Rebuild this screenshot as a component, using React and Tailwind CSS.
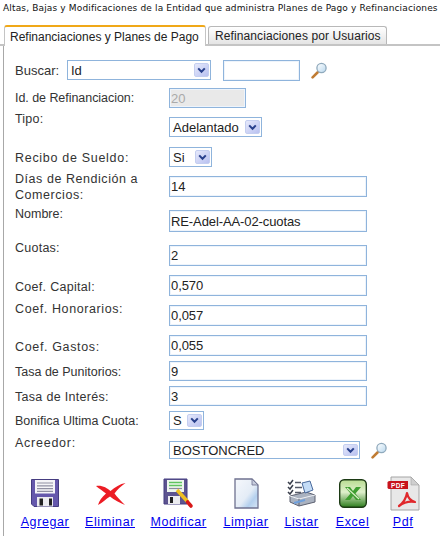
import React from "react";

const Lens = () => (
  <svg width="17" height="17" viewBox="0 0 17 17">
    <defs>
      <linearGradient id="lg" x1="0" y1="0" x2="1" y2="1">
        <stop offset="0" stopColor="#ffffff" />
        <stop offset="1" stopColor="#b9d8ee" />
      </linearGradient>
    </defs>
    <path d="M6.5 10.5L1.6 15.4" stroke="#c07c34" strokeWidth="2.6" strokeLinecap="round" />
    <circle cx="10.5" cy="6" r="4.6" fill="url(#lg)" stroke="#8fa9bc" strokeWidth="1.3" />
  </svg>
);

const Arrow = () => (
  <span className="flex h-full w-[15px] shrink-0 items-center justify-center rounded-[2px] border border-[#c4cef0] bg-gradient-to-br from-[#e6e9fb] to-[#b9c1f0]">
    <svg width="9" height="7" viewBox="0 0 9 7">
      <path d="M1.2 1.4L4.5 4.8L7.8 1.4" fill="none" stroke="#28408c" strokeWidth="2" />
    </svg>
  </span>
);

const Select = ({ value, className }) => (
  <div className={`flex items-center justify-between border border-[#8fb4dc] bg-white py-[2px] pl-[3px] pr-[1px] text-[13px] leading-none tracking-normal text-[#222] ${className}`}>
    <span>{value}</span>
    <Arrow />
  </div>
);

const Field = ({ value, className = "h-[21px] w-[198px]" }) => (
  <input
    readOnly
    defaultValue={value}
    className={`border border-[#8fb4dc] bg-white px-[1px] text-[13px] tracking-[-0.1px] text-[#222] outline-none [box-shadow:inset_0_0_0_1px_#eef4fb] ${className}`}
  />
);

const Floppy = () => (
  <svg width="30" height="30" viewBox="0 0 30 30">
    <path d="M1.500 1.500H28.500V28.500H4L1.500 26Z" fill="#6558ac" stroke="#453c80" />
    <path d="M5 2H25V15.500H5Z" fill="#f4f4f8" />
    <path d="M7 5H23M7 7.800H23M7 10.600H23M7 13.400H23" stroke="#8f8fa2" strokeWidth="1.200" />
    <path d="M7 19H23V28.500H7Z" fill="#ecECF0" />
    <path d="M9.500 20.500H13V27.500H9.500ZM19 20.500H22V27.500H19Z" fill="#222" />
  </svg>
);

const Cross = () => (
  <svg width="31" height="26" viewBox="0 0 31 26">
    <path d="M1 6C7 5 12 8 15.500 11C20 7 25 4 30.500 3C26 6 22 10 19.500 13.500C22 17 26 21 30 25C25 23 19 20 15 16.500C11 19 7 23 3 25C4 21 7 17 11 13.500C8 11 4 8.500 1 6Z" fill="#ec1c24" />
  </svg>
);

const FloppyEdit = () => (
  <svg width="31" height="31" viewBox="0 0 31 31">
    <path d="M1 1H24V26H1Z" fill="#5d5490" stroke="#453c80" />
    <path d="M4 2H21V14H4Z" fill="#eef6ee" />
    <path d="M6 4.500H19M6 7.500H19" stroke="#5fc45f" strokeWidth="1.400" />
    <path d="M6 10.500H19" stroke="#8a8a9c" strokeWidth="1.200" />
    <path d="M5 18H17V26H5Z" fill="#ecECF0" />
    <path d="M7 19H10V25H7Z" fill="#222" />
    <path d="M14 12L25 24" stroke="#f0c020" strokeWidth="3.600" />
    <path d="M24.500 24L28 28" stroke="#d81818" strokeWidth="3.600" strokeLinecap="round" />
  </svg>
);

const Doc = () => (
  <svg width="25" height="31" viewBox="0 0 25 31">
    <defs>
      <linearGradient id="dg" x1="0" y1="0" x2="1" y2="1">
        <stop offset="0" stopColor="#f6f8fc" />
        <stop offset="0.55" stopColor="#e4ecf6" />
        <stop offset="0.75" stopColor="#b4d0ee" />
        <stop offset="1" stopColor="#d8e6f6" />
      </linearGradient>
    </defs>
    <path d="M1 1H18L24 7V30H1Z" fill="url(#dg)" stroke="#6f7290" strokeWidth="1.300" />
    <path d="M18 1V7H24Z" fill="#c8cede" stroke="#6f7290" strokeWidth="0.800" />
  </svg>
);

const Printer = () => (
  <svg width="29" height="29" viewBox="0 0 29 29">
    <path d="M3 17L19 13L28 16V23L12 27L3 23Z" fill="#aab2c0" stroke="#5c6070" />
    <path d="M3 17L12 20L28 16" fill="none" stroke="#eef0f4" />
    <path d="M12 20V27" stroke="#5c6070" />
    <path d="M15 4L23 2L26 11L18 14Z" fill="#c4dcf6" stroke="#4a6a9c" />
    <path d="M1 3L3 5L6 1M1 8L3 10L6 6M1 13L3 15L6 11" fill="none" stroke="#3a3f4c" strokeWidth="1.500" />
    <path d="M8 3.500H14M8 8.500H15M8 13.500H14" stroke="#555a68" strokeWidth="1.500" />
    <path d="M7 24L18 21" stroke="#6fa0dc" strokeWidth="2" />
  </svg>
);

const Excel = () => (
  <svg width="28" height="29" viewBox="0 0 28 29">
    <defs>
      <linearGradient id="xg" x1="0" y1="0" x2="0" y2="1">
        <stop offset="0" stopColor="#b8dc90" />
        <stop offset="0.45" stopColor="#dff0cc" />
        <stop offset="1" stopColor="#2c7c1c" />
      </linearGradient>
    </defs>
    <rect x="0.700" y="0.700" width="26.600" height="27.600" rx="4.500" fill="url(#xg)" stroke="#1c3a14" strokeWidth="1.400" />
    <path d="M6 8H11L14 12L17 8H22L16.500 14.500L22 21H17L14 17L11 21H6L11.500 14.500Z" fill="#3f9e30" />
    <path d="M8 9L20 20" stroke="#d8f0c4" strokeWidth="1.200" />
  </svg>
);

const Pdf = () => (
  <svg width="33" height="35" viewBox="0 0 33 35">
    <path d="M4 1H24L32 9V34H4Z" fill="#e8e8e8" stroke="#a4a4a4" />
    <path d="M24 1V9H32Z" fill="#cfcfcf" stroke="#a4a4a4" strokeWidth="0.600" />
    <path d="M0.500 6.500Q0.500 5 2.500 5H21V13H2.500Q0.500 13 0.500 11.500Z" fill="#c8141c" />
    <path d="M20 17C19 23 16 27 12 30C16 27 22 25 28 26C24 25 21 22 20 17Z" fill="none" stroke="#e0282c" strokeWidth="2.200" strokeLinejoin="round" />
    <text x="11" y="11.500" textAnchor="middle" fontSize="6.500" fontWeight="700" fill="#fff" fontFamily="'Liberation Sans', sans-serif">PDF</text>
  </svg>
);

const rows = [
  { label: "Id. de Refinanciacion:", h: "h-[29px]", lc: "mt-[2px] tracking-[-0.05px]", ctrl: <Field value="20" className="h-[20px] w-[77px] !bg-[#e9e9e9] !text-[#aaa]" /> },
  { label: "Tipo:", h: "h-[30px]", lc: "mt-[-6px] tracking-[0.2px]", ctrl: <Select value="Adelantado" className="h-[20px] w-[93px]" /> },
  { label: "Recibo de Sueldo:", h: "h-[25px]", lc: "mt-[3px] tracking-[0.7px]", ctrl: <Select value="Si" className="h-[20px] w-[43px]" /> },
  { label: <>Días de Rendición a<br />Comercios:</>, h: "h-[38px]", lc: "mt-[-1px] tracking-[0.55px]", cc: "pt-[4px]", ctrl: <Field value="14" /> },
  { label: "Nombre:", h: "h-[35px]", lc: "mt-[-4px] tracking-[0px]", ctrl: <Field value="RE-Adel-AA-02-cuotas" className="h-[22px] w-[198px]" /> },
  { label: "Cuotas:", h: "h-[30px]", lc: "mt-[-5px] tracking-[0.25px]", ctrl: <Field value="2" /> },
  { label: "Coef. Capital:", h: "h-[30px]", lc: "mt-[4px] tracking-[0.3px]", ctrl: <Field value="0,570" /> },
  { label: "Coef. Honorarios:", h: "h-[30px]", lc: "mt-[-4px] tracking-[0.6px]", ctrl: <Field value="0,057" /> },
  { label: "Coef. Gastos:", h: "h-[26px]", lc: "mt-[4px] tracking-[0.65px]", ctrl: <Field value="0,055" /> },
  { label: "Tasa de Punitorios:", h: "h-[25px]", lc: "mt-[3px] tracking-[0px]", ctrl: <Field value="9" className="h-[20px] w-[198px]" /> },
  { label: "Tasa de Interés:", h: "h-[25px]", lc: "mt-[3px] tracking-[0.3px]", ctrl: <Field value="3" className="h-[20px] w-[198px]" /> },
  { label: "Bonifica Ultima Cuota:", h: "h-[30px]", lc: "mt-[2px] tracking-[0px]", ctrl: <Select value="S" className="h-[19px] w-[35px]" /> },
  {
    label: "Acreedor:",
    h: "h-[27px]",
    lc: "mt-[-6px] tracking-[0.75px]",
    ctrl: (
      <div className="flex items-center gap-[11px]">
        <Select value="BOSTONCRED" className="h-[18px] w-[191px]" />
        <Lens />
      </div>
    ),
  },
];

const actions = [
  { t: "Agregar", I: Floppy, w: "w-[50px]", mr: "mr-[16px]" },
  { t: "Eliminar", I: Cross, w: "w-[48px]", mr: "mr-[16px]" },
  { t: "Modificar", I: FloppyEdit, w: "w-[57px]", mr: "mr-[17px]" },
  { t: "Limpiar", I: Doc, w: "w-[44px]", mr: "mr-[16px]" },
  { t: "Listar", I: Printer, w: "w-[35px]", mr: "mr-[17px]" },
  { t: "Excel", I: Excel, w: "w-[33px]", mr: "mr-[24px]" },
  { t: "Pdf", I: Pdf, w: "w-[20px]", mr: "" },
];

export default function App() {
  return (
    <div className="h-[536px] w-[440px] overflow-hidden bg-white font-['Liberation_Sans',Arial,sans-serif] text-[12.5px] tracking-[0.4px] text-[#333]">
      <div className="h-[26px] whitespace-nowrap pl-[3px] pt-[3px] font-['DejaVu_Sans',sans-serif] text-[9px] leading-[11px] tracking-[0.15px] text-[#111]">
        Altas, Bajas y Modificaciones de la Entidad que administra Planes de Pago y Refinanciaciones
      </div>

      <div className="flex h-[20px] items-end border-b-2 border-[#c4c4c4] pl-[4px]">
        <div className="relative z-10 mb-[-2px] flex h-[21px] w-[202px] items-center whitespace-nowrap rounded-t-[3px] border-x border-t-2 border-[#c4c4c4] border-t-[#f0a818] bg-white pl-[5px] text-[12px] tracking-[0px] text-[#222]">
          Refinanciaciones y Planes de Pago
        </div>
        <div className="ml-[2px] flex h-[18px] w-[179px] items-center whitespace-nowrap rounded-t-[3px] border-x border-t border-[#b8b8b8] bg-gradient-to-b from-white to-[#e4e4e4] pl-[6px] text-[12px] tracking-[0.1px] text-[#222]">
          Refinanciaciones por Usuarios
        </div>
      </div>

      <div className="ml-[3px] h-[490px] border-l border-[#a8a8a8] pl-[11px] pt-[14px]">
        <div className="flex h-[28px] items-start">
          <span className="mt-[3px] w-[52px] text-[13px] leading-[16px] tracking-normal">Buscar:</span>
          <Select value="Id" className="h-[20px] w-[144px]" />
          <Field value="" className="ml-[12px] h-[21px] w-[77px]" />
          <span className="ml-[11px] mt-[2px]"><Lens /></span>
        </div>

        {rows.map((r, i) => (
          <div key={i} className={`grid grid-cols-[154px_1fr] items-start ${r.h}`}>
            <div className={`leading-[16px] ${r.lc}`}>{r.label}</div>
            <div className={r.cc || ""}>{r.ctrl}</div>
          </div>
        ))}

        <div className="mt-[-2px] flex items-start pl-[5px]">
          {actions.map(({ t, I, w, mr }) => (
            <div key={t} className={`flex h-[64px] flex-col items-center justify-end pt-[6px] ${w} ${mr}`}>
              <div className="flex flex-1 items-center justify-center"><I /></div>
              <a href="#" className="whitespace-nowrap text-[12.5px] leading-[16px] tracking-[0.6px] text-[#0000ee] underline">{t}</a>
            </div>
          ))}
        </div>
      </div>
    </div>
  );
}
